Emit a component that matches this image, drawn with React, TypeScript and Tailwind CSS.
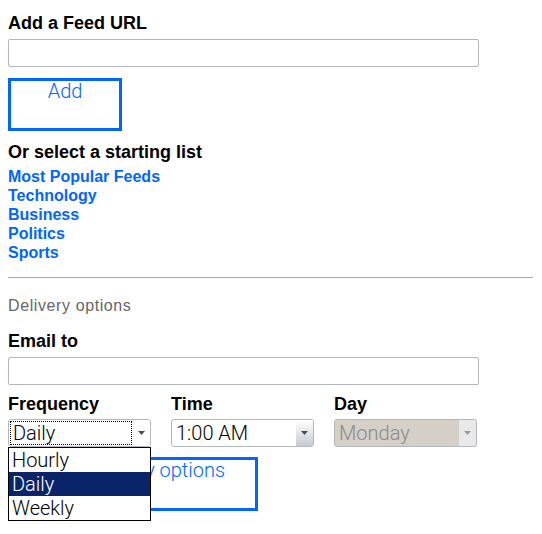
import { useState } from "react";

const thin = "font-['Roboto','Liberation_Sans',sans-serif] font-light";
const bold = "font-['Liberation_Sans',Arial,sans-serif] font-bold";

function Arrow({ muted }: { muted?: boolean }) {
  return (
    <svg width="7" height="4" viewBox="0 0 7 4" className="block">
      <path d="M0 0h7L3.5 4z" fill={muted ? "#9a9a9a" : "#4a4c58"} />
    </svg>
  );
}

function Select({
  value,
  kind,
}: {
  value: string;
  kind: "focus" | "normal" | "disabled";
}) {
  const disabled = kind === "disabled";
  return (
    <div
      className={`flex h-[28px] w-[143px] overflow-hidden rounded-[3px] border border-[#b4b7bf] ${
        disabled ? "bg-[#d4d0c8]" : "bg-white"
      }`}
    >
      <div className="flex flex-1 items-center p-[1px]">
        <div
          className={`flex h-full w-full items-center pl-[2px] text-[20px] leading-none ${thin} ${
            kind === "focus" ? "border border-dotted border-black" : "border border-transparent"
          } ${disabled ? "text-[#8c8a86]" : "text-black"}`}
        >
          {value}
        </div>
      </div>
      <div
        className={`flex w-[17px] items-center justify-center ${
          kind === "normal"
            ? "bg-gradient-to-b from-white to-[#c6cbd4]"
            : disabled
              ? "bg-[#e9e9e9]"
              : "bg-white"
        }`}
      >
        <Arrow muted={disabled} />
      </div>
    </div>
  );
}

export default function App() {
  const [url, setUrl] = useState("");
  const [email, setEmail] = useState("");
  const lists = ["Most Popular Feeds", "Technology", "Business", "Politics", "Sports"];
  const options = ["Hourly", "Daily", "Weekly"];

  return (
    <main className="min-h-[534px] bg-white px-2 pt-[13px] text-black">
      <h1 className={`text-[18px] leading-[21px] ${bold}`}>Add a Feed URL</h1>
      <input
        className="mt-[5px] block h-[28px] w-[471px] rounded-[2px] border border-[#b4b7bf] bg-white px-1 outline-none"
        value={url}
        onChange={(e) => setUrl(e.target.value)}
      />
      <button
        className={`mt-[11px] flex h-[53px] w-[114px] justify-center border-[3px] border-[#0066ff] bg-white text-[20px] leading-[20px] text-[#0066ff] ${thin}`}
      >
        Add
      </button>

      <h2 className={`mt-[11px] text-[18px] leading-[21px] ${bold}`}>Or select a starting list</h2>
      <ul className={`mt-[4px] text-[16px] leading-[19px] ${bold}`}>
        {lists.map((l) => (
          <li key={l} className="h-[19px] leading-[19px]">
            <a href="#" className="text-[#0066ff]">
              {l}
            </a>
          </li>
        ))}
      </ul>

      <hr className="mt-[15px] w-[525px] border-t border-[#a9a9a9]" />

      <div className="mt-[18px] font-['Liberation_Sans',Arial,sans-serif] text-[16px] leading-[19px] tracking-[0.6px] text-[#666]">
        Delivery options
      </div>

      <h3 className={`mt-[16px] text-[18px] leading-[21px] ${bold}`}>Email to</h3>
      <input
        className="mt-[5px] block h-[28px] w-[471px] rounded-[2px] border border-[#b4b7bf] bg-white px-1 outline-none"
        value={email}
        onChange={(e) => setEmail(e.target.value)}
      />

      <div className="relative z-10 mt-[9px] grid grid-cols-[143px_143px_143px] gap-x-[20px]">
        <div>
          <div className={`text-[18px] leading-[21px] ${bold}`}>Frequency</div>
          <div className="relative mt-[4px]">
            <Select value="Daily" kind="focus" />
            <ul
              className={`absolute left-0 top-[28px] w-[143px] border border-black bg-white text-[20px] ${thin}`}
            >
              {options.map((o) => (
                <li
                  key={o}
                  className={`flex h-[24px] items-center pl-[3px] leading-none ${
                    o === "Daily" ? "bg-[#0a246a] text-white" : "text-black"
                  }`}
                >
                  {o}
                </li>
              ))}
            </ul>
          </div>
        </div>
        <div>
          <div className={`text-[18px] leading-[21px] ${bold}`}>Time</div>
          <div className="mt-[4px]">
            <Select value="1:00 AM" kind="normal" />
          </div>
        </div>
        <div>
          <div className={`text-[18px] leading-[21px] ${bold}`}>Day</div>
          <div className="mt-[4px]">
            <Select value="Monday" kind="disabled" />
          </div>
        </div>
      </div>

      <button
        className={`mt-[10px] flex h-[54px] w-[250px] justify-center border-[3px] border-[#0066ff] bg-white text-[20px] leading-[20px] text-[#0066ff] ${thin}`}
      >
        Save delivery options
      </button>
    </main>
  );
}
